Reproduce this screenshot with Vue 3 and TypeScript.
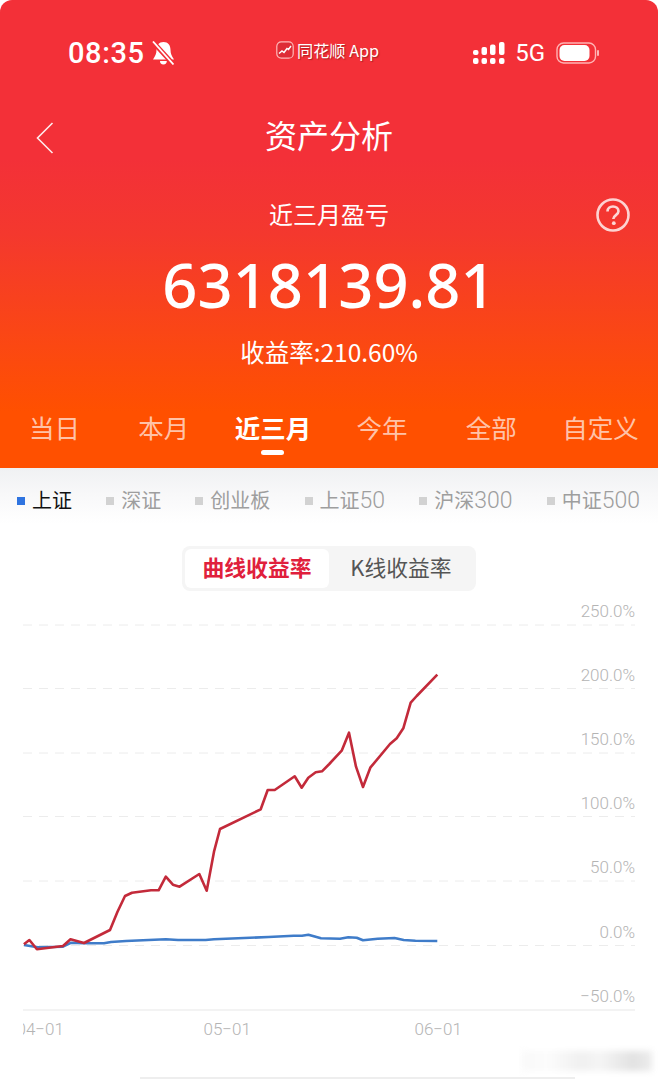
<script setup lang="ts">
import { ref } from 'vue'

type Point = [number, number]

const tabs = ['当日', '本月', '近三月', '今年', '全部', '自定义']
const activeTab = ref(2)

const indexes = [
  { name: '上证', size: '' },
  { name: '深证', size: '' },
  { name: '创业板', size: '' },
  { name: '上证', size: '50' },
  { name: '沪深', size: '300' },
  { name: '中证', size: '500' }
]
const activeIndex = ref(0)

// horizontal guides and their labels, top to bottom
const guides = [
  { y: 625, label: '250.0%', labelY: 611 },
  { y: 688.5, label: '200.0%', labelY: 675 },
  { y: 753, label: '150.0%', labelY: 739 },
  { y: 816.5, label: '100.0%', labelY: 803 },
  { y: 881, label: '50.0%', labelY: 867 },
  { y: 945.5, label: '0.0%', labelY: 932 }
]

const dates = [
  { x: 16.5, label: '04−01' },
  { x: 203.5, label: '05−01' },
  { x: 414.5, label: '06−01' }
]

const profitCurve: Point[] = [
  [23.9, 944.3], [29.4, 940], [36.9, 949.3], [63, 946], [70.5, 939.3], [84, 943],
  [110, 930], [117.5, 911.7], [125, 896], [132, 892.7], [151, 890.3], [158.6, 890.3],
  [165.8, 876.7], [172.9, 884.7], [179.6, 886.7], [199.3, 874], [206.7, 890.7],
  [214, 851.7], [220, 829], [260.7, 809.3], [267.7, 790], [274.7, 790], [294.7, 776.3],
  [301.7, 787.7], [308.3, 777.7], [315.7, 772.3], [322, 771.3], [329.3, 764],
  [341.7, 750.7], [349, 732.7], [356, 766.7], [363, 787], [370.3, 767.7], [390, 744],
  [396.7, 738.3], [403.3, 728.3], [410.7, 702.7], [416.7, 696], [437.3, 674.7]
]

const benchmarkCurve: Point[] = [
  [24, 945], [37.8, 947.3], [63, 946.7], [71.3, 942.7], [84, 943.3], [104, 943.3],
  [111, 942], [126, 941], [165.8, 939.3], [178, 940], [205.6, 940], [214, 939.3],
  [268.6, 937], [293.7, 935.7], [302, 935.7], [308.4, 934.7], [321, 938.3], [340, 938.7],
  [348.3, 937.3], [356.7, 937.7], [363, 940.3], [377.7, 938.7], [394.5, 938], [403.7, 940],
  [415.4, 940.7], [437.3, 941]
]

const toPoints = (curve: Point[]) => curve.map(p => p.join(',')).join(' ')
</script>

<template>
  <div class="page">
    <header class="hero">
      <div class="status">
        <div class="status-left">
          <span class="clock">08:35</span>
          <svg class="bell" viewBox="0 0 22 24" width="22" height="24">
            <path d="M11.500 1c-4.600 0-7 3.300-7 7.800 0 4-1.200 6.400-3.500 9.700h21c-2.300-3.300-3.500-5.700-3.500-9.700 0-4.500-2.400-7.800-7-7.800z" fill="#fff" />
            <path d="M8 20a3.400 3.400 0 0 0 6.800 0z" fill="#fff" />
            <path d="M1 1l21 23" stroke="#f33038" stroke-width="4.800" />
            <path d="M1 0.500l20.500 23" stroke="#fff" stroke-width="1.800" />
          </svg>
        </div>
        <div class="status-app">
          <svg viewBox="0 0 18 18" width="18" height="18">
            <rect x="0.8" y="0.8" width="16.4" height="16.4" rx="4.5" fill="#de2c36" stroke="#ffb9b9" stroke-width="1.200" />
            <path d="M3 12.500l3-2.500 2 1.500 3-4 1.500 1L15 5" fill="none" stroke="#fff" stroke-width="1.400" />
          </svg>
          <span>同花顺 App</span>
        </div>
        <div class="status-right">
          <svg viewBox="0 0 32 23" width="32" height="23">
            <g fill="#fff">
              <rect x="0" y="8" width="5.5" height="5" rx="2" />
              <rect x="8.5" y="5" width="5.5" height="8" rx="2" />
              <rect x="17" y="2.5" width="5.5" height="10.5" rx="2" />
              <rect x="26" y="0" width="5.5" height="13" rx="2" />
              <rect x="0" y="16" width="5.5" height="6" rx="2" />
              <rect x="8.5" y="16" width="5.5" height="6" rx="2" />
              <rect x="17" y="16" width="5.5" height="6" rx="2" />
              <rect x="26" y="16" width="5.5" height="6" rx="2" />
            </g>
          </svg>
          <span class="network">5G</span>
          <svg viewBox="0 0 44 22" width="44" height="22">
            <rect x="1" y="1" width="38.5" height="20" rx="6.5" fill="none" stroke="#ffb3b3" stroke-width="1.400" />
            <rect x="3.5" y="3" width="30" height="16" rx="5" fill="#fff" />
            <rect x="41" y="8" width="2" height="6" rx="1" fill="#ffb3b3" />
          </svg>
        </div>
      </div>

      <nav class="nav">
        <svg class="back" viewBox="0 0 18 32" width="18" height="32">
          <path d="M16.500 1L1.500 16l15 15" fill="none" stroke="#fff" stroke-width="1.600" stroke-opacity="0.9" />
        </svg>
        <h1>资产分析</h1>
      </nav>

      <div class="summary-label">
        近三月盈亏
        <svg class="help" viewBox="0 0 34 34" width="34" height="34">
          <circle cx="17" cy="17" r="15.500" fill="none" stroke="#fff" stroke-opacity="0.78" stroke-width="2.600" />
          <path d="M11.500 13.500c0-3.200 2.400-5 5.500-5s5.500 1.800 5.500 4.800c0 3.800-5.200 3.900-5.200 7.700" fill="none" stroke="#fff" stroke-opacity="0.8" stroke-width="2.600" />
          <circle cx="17.800" cy="25.200" r="1.900" fill="#fff" fill-opacity="0.8" />
        </svg>
      </div>
      <div class="amount">6318139.81</div>
      <div class="rate">收益率:210.60%</div>

      <div class="tabs">
        <span
          v-for="(tab, i) in tabs"
          :key="tab"
          :class="['tab', { active: i === activeTab }]"
        >{{ tab }}</span>
      </div>
    </header>

    <div class="legend">
      <span
        v-for="(item, i) in indexes"
        :key="item.name + item.size"
        :class="['legend-item', { active: i === activeIndex }]"
      ><i class="marker"></i><span>{{ item.name }}<span class="legend-size">{{ item.size }}</span></span></span>
    </div>

    <div class="toggle">
      <span class="toggle-item active">曲线收益率</span>
      <span class="toggle-item">K线收益率</span>
    </div>

    <svg class="chart" viewBox="0 591 658 486" width="658" height="486">
      <defs>
        <clipPath id="axis-clip">
          <rect x="23" y="1000" width="620" height="60" />
        </clipPath>
      </defs>
      <g v-for="g in guides" :key="g.label">
        <line x1="23" x2="635" :y1="g.y" :y2="g.y" class="guide" />
        <text x="635" :y="g.labelY" class="axis-text" text-anchor="end" dominant-baseline="central">{{ g.label }}</text>
      </g>
      <text x="635" y="996" class="axis-text" text-anchor="end" dominant-baseline="central">−50.0%</text>
      <line x1="23" x2="635" y1="1010" y2="1010" class="baseline" />
      <g clip-path="url(#axis-clip)">
        <text v-for="d in dates" :key="d.label" :x="d.x" y="1029" class="axis-text" dominant-baseline="central">{{ d.label }}</text>
      </g>
      <polyline :points="toPoints(benchmarkCurve)" class="curve benchmark" />
      <polyline :points="toPoints(profitCurve)" class="curve profit" />
    </svg>

    <div class="home-line"></div>
    <div class="smudge"></div>
  </div>
</template>

<style>
html,
body {
  margin: 0;
  background: #fff;
}
</style>

<style scoped>
.page {
  position: relative;
  width: 658px;
  height: 1080px;
  overflow: hidden;
  background: #fff;
  font-family: "Noto Sans CJK SC", "Noto Sans", sans-serif;
}

.hero {
  height: 468px;
  box-sizing: border-box;
  padding-top: 30px;
  border-radius: 12px 12px 0 0;
  color: #fff;
  background: linear-gradient(180deg, #f33038 0%, #f33038 34%, #f4382e 50%, #fb4812 74%, #ff5000 88%, #ff5000 100%);
}

.status {
  position: relative;
  display: flex;
  align-items: center;
  justify-content: space-between;
  height: 46px;
  padding: 0 58px 0 68px;
}

.status-left {
  display: flex;
  align-items: center;
  gap: 7px;
}

.clock {
  font-family: Roboto, sans-serif;
  font-size: 29px;
  font-weight: 500;
  letter-spacing: 0.6px;
}

.status-app {
  position: absolute;
  left: 276px;
  top: 8px;
  display: flex;
  align-items: center;
  gap: 3px;
  font-size: 16.2px;
  text-shadow: 1px 1px 1px rgba(120, 20, 20, 0.55);
}

.status-right {
  display: flex;
  align-items: center;
  gap: 10px;
}

.network {
  font-family: Roboto, sans-serif;
  font-size: 24px;
  margin-right: 1px;
}

.nav {
  position: relative;
  display: flex;
  align-items: center;
  justify-content: center;
  height: 48px;
  margin-top: 36px;
}

.nav h1 {
  margin: 0;
  font-size: 32px;
  font-weight: 400;
  line-height: 44px;
  height: 48px;
}

.back {
  position: absolute;
  left: 36px;
  top: 10px;
}

.summary-label {
  position: relative;
  height: 30px;
  margin-top: 40px;
  font-size: 24px;
  line-height: 27px;
  text-align: center;
}

.help {
  position: absolute;
  right: 28px;
  top: -2px;
}

.amount {
  height: 80px;
  margin-top: 15px;
  font-family: "Noto Sans", sans-serif;
  font-size: 61.5px;
  font-weight: 500;
  line-height: 78px;
  text-align: center;
}

.rate {
  height: 30px;
  margin-top: 13px;
  font-size: 24.5px;
  line-height: 27px;
  text-align: center;
}

.tabs {
  display: grid;
  grid-template-columns: repeat(6, 1fr);
  height: 40px;
  margin-top: 40px;
  padding-right: 3px;
}

.tab {
  position: relative;
  font-size: 25.5px;
  line-height: 37px;
  text-align: center;
  color: rgba(255, 255, 255, 0.68);
}

.tab.active {
  color: #fff;
  font-weight: 700;
}

.tab.active::after {
  content: "";
  position: absolute;
  left: 50%;
  top: 42px;
  width: 23px;
  height: 5px;
  margin-left: -12px;
  border-radius: 3px;
  background: #fff;
}

.legend {
  display: flex;
  align-items: center;
  justify-content: space-between;
  box-sizing: border-box;
  height: 66px;
  padding: 0 18px 4px 17px;
  background: linear-gradient(180deg, #f0f1f3 0%, #f8f8f9 40%, #fff 85%);
}

.legend-item {
  display: flex;
  align-items: center;
  gap: 7px;
  font-size: 20px;
  color: #9e9e9e;
}

.legend-item.active {
  color: #111;
}

.legend-size {
  font-family: Roboto, sans-serif;
  font-size: 23px;
  font-weight: 300;
  line-height: 1;
}

.marker {
  width: 8px;
  height: 8px;
  margin-top: 4px;
  background: #d2d2d2;
}

.legend-item.active .marker {
  background: #2f74e0;
}

.toggle {
  display: flex;
  box-sizing: border-box;
  width: 294px;
  height: 45px;
  margin: 12px 0 0 182px;
  padding: 3px;
  border-radius: 8px;
  background: #f5f5f5;
}

.toggle-item {
  flex: 1;
  border-radius: 6px;
  font-size: 21.8px;
  line-height: 35px;
  text-align: center;
  color: #555;
}

.toggle-item.active {
  flex: 0 0 144px;
  background: #fff;
  color: #e0203c;
  font-weight: 700;
}

.chart {
  display: block;
}

.guide {
  stroke: #ececec;
  stroke-width: 1;
  stroke-dasharray: 9 7;
}

.baseline {
  stroke: #efefef;
  stroke-width: 1.5;
}

.axis-text {
  font-family: Roboto, sans-serif;
  font-size: 17px;
  font-weight: 300;
  fill: #b4b4b4;
}

.curve {
  fill: none;
  stroke-width: 2.6;
  stroke-linejoin: round;
}

.profit {
  stroke: #c32a3a;
}

.benchmark {
  stroke: #3f7cc9;
}

.home-line {
  width: 435px;
  height: 2px;
  margin: 0 0 0 140px;
  background: #eeeeee;
}

.smudge {
  position: absolute;
  left: 522px;
  top: 1051px;
  width: 130px;
  height: 20px;
  background: linear-gradient(90deg, #f9f9f9, #fcfcfc 20%, #f0f0f0 45%, #f5f5f5 60%, #e2e2e2 85%, #ececec);
  filter: blur(3px);
}
</style>
